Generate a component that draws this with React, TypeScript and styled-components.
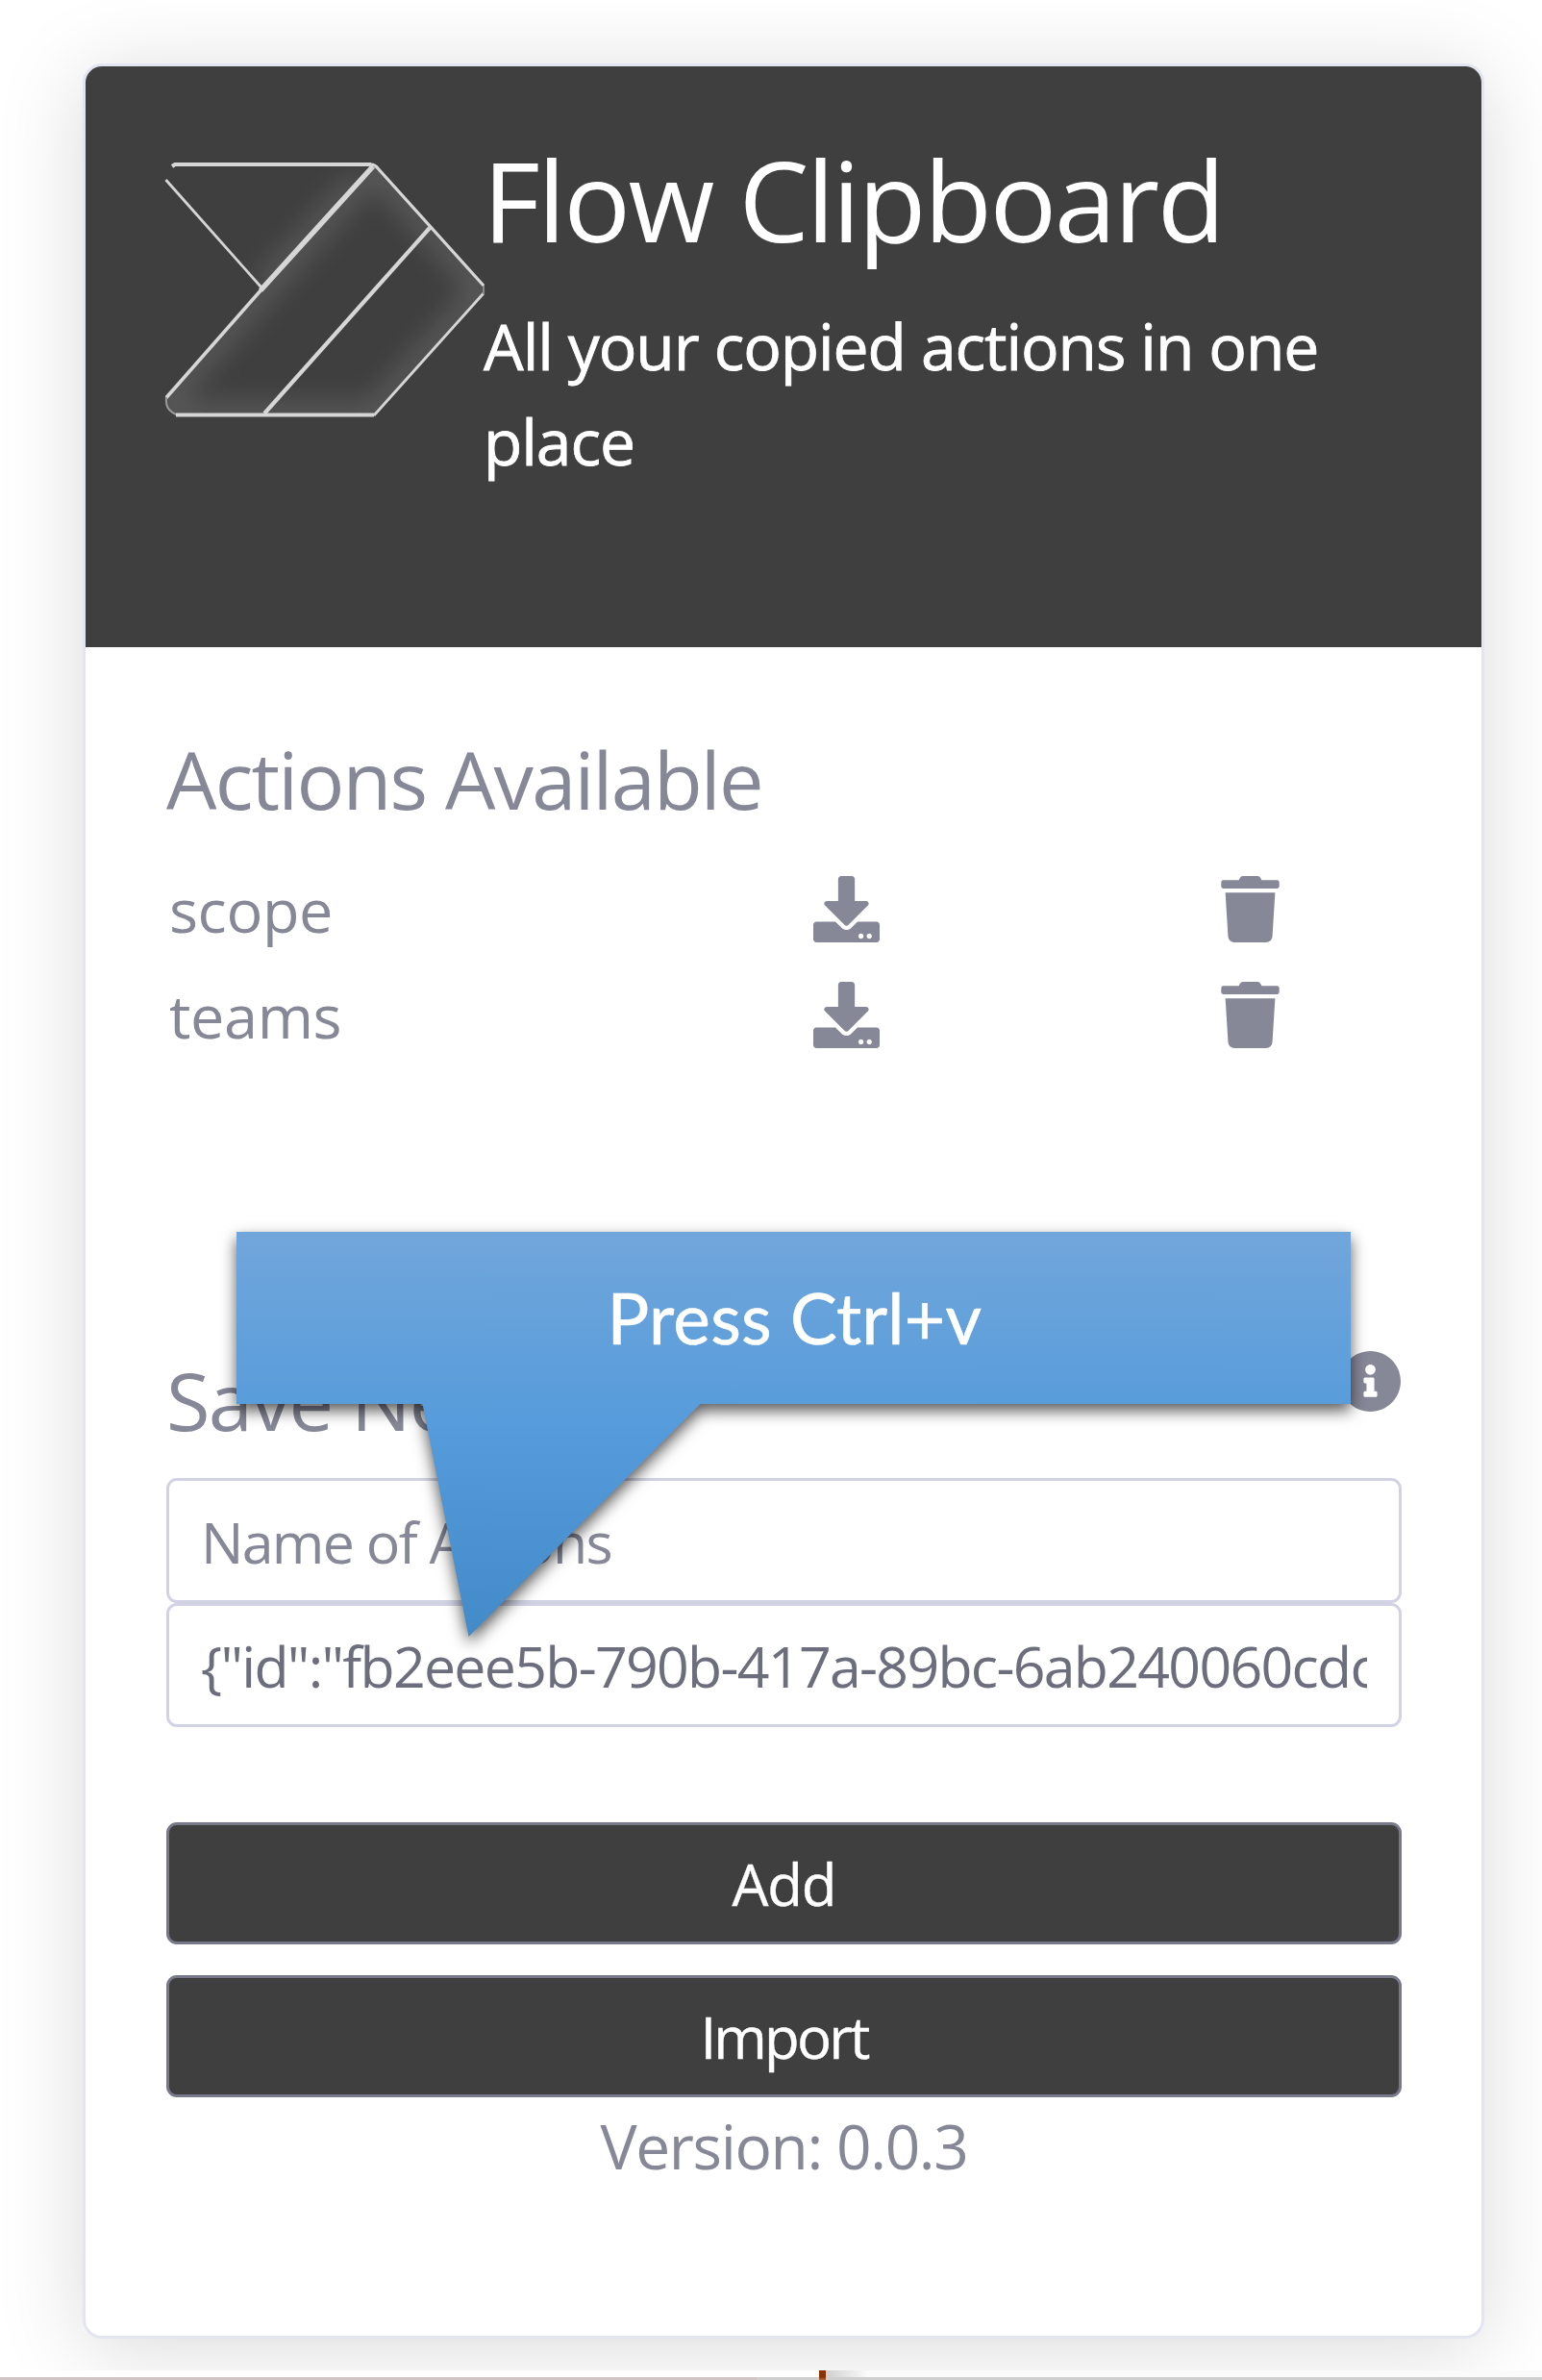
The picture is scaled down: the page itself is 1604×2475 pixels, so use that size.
import React from "react";
import styled, { createGlobalStyle } from "styled-components";
import { FaDownload, FaInfoCircle, FaTrash } from "react-icons/fa";

const GlobalStyle = createGlobalStyle`
  *, *::before, *::after { box-sizing: border-box; }
  body { margin: 0; background: #fff; overflow: hidden; }
`;

const Page = styled.div`
  display: flex;
  flex-direction: column;
  width: 1604px;
  height: 2475px;
  overflow: hidden;
  color: #868797;
  font-family: "Open Sans", "Noto Sans", sans-serif;
`;

const Stage = styled.main`
  position: relative;
  height: 2465px;
  padding: 66px 0 0 86px;
  overflow: hidden;
  background: #fff;
`;

const Card = styled.section`
  display: flex;
  flex-direction: column;
  width: 1458px;
  height: 2366px;
  border: 3px solid #e3e5f1;
  border-radius: 20px;
  background: #fff;
  box-shadow: 0 10px 90px rgba(0, 0, 0, 0.15);
  overflow: hidden;
`;

const Header = styled.header`
  display: flex;
  height: 604px;
  padding: 68px 83px 0;
  background: #3f3f3f;
  color: #fff;
`;

const Logo = styled.svg`
  flex: none;
  width: 335px;
  height: 272px;
  margin: 29px -2px 0 -2px;
`;

const HeaderText = styled.div`
  flex: 1;
  min-width: 0;
`;

const Title = styled.h1`
  margin: 0 0 33px -1px;
  font-size: 116px;
  font-weight: 400;
  line-height: 140px;
  letter-spacing: -2.5px;
`;

const Subtitle = styled.p`
  margin: 0;
  font-size: 66px;
  font-weight: 400;
  line-height: 99px;
  letter-spacing: -1.1px;
  -webkit-text-stroke: 0.8px #fff;
`;

const Body = styled.div`
  display: flex;
  flex-direction: column;
  padding: 87px 83px 0 84px;
`;

const Heading = styled.h2`
  margin: 0;
  font-size: 83px;
  font-weight: 400;
  line-height: 100px;
  letter-spacing: -1.85px;
`;

const ActionList = styled.ul`
  margin: 31px 0 0;
  padding: 0 0 0 3px;
  list-style: none;
`;

const ActionRow = styled.li`
  display: grid;
  grid-template-columns: 670px 420px 1fr;
  align-items: center;
  height: 109.5px;
  font-size: 63px;
  letter-spacing: -0.4px;
`;

const IconButton = styled.button`
  display: flex;
  justify-self: start;
  padding: 0;
  border: 0;
  background: none;
  color: inherit;
  font-size: 69px;
`;

const SaveHeader = styled.div`
  display: flex;
  justify-content: space-between;
  align-items: flex-start;
  margin: 296px 0 31px;
  & > svg { margin-top: -2px; font-size: 65px; }
`;

const Field = styled.input`
  width: 100%;
  height: 129.5px;
  padding: 2px 33px 0;
  border: 3px solid #d1d2e4;
  border-radius: 11px;
  outline: 0;
  background: #fff;
  color: #6c6d7d;
  font: 400 59px "Open Sans", "Noto Sans", sans-serif;
  letter-spacing: -1.69px;
  &::placeholder { color: #868797; opacity: 1; }
`;

const Buttons = styled.div`
  display: flex;
  flex-direction: column;
  gap: 32px;
  margin-top: 99px;
`;

const Button = styled.button<{ $tracking: number }>`
  height: 127px;
  padding: 0;
  border: 3px solid #77788a;
  border-radius: 11px;
  background: #3f3f3f;
  color: #fff;
  font: 400 60px "Open Sans", "Noto Sans", sans-serif;
  letter-spacing: ${(p) => p.$tracking}px;
  -webkit-text-stroke: 0.4px #fff;
`;

const Version = styled.p`
  margin: 1px 0 0;
  font-size: 64px;
  line-height: 99px;
  letter-spacing: -1.4px;
  text-align: center;
`;

const Callout = styled.div`
  position: absolute;
  left: 246px;
  top: 1281px;
  width: 1159px;
  height: 421px;
  filter: drop-shadow(0 7px 8px rgba(0, 0, 0, 0.65));
`;

const CalloutShape = styled.div`
  height: 421px;
  background: linear-gradient(#71a6db, #559bdb 50%, #438ac9);
  clip-path: polygon(0 0, 100% 0, 100% 179px, 482.5px 179px, 241.5px 100%, 193.5px 179px, 0 179px);
  color: #fff;
  font-family: Lato, "Open Sans", sans-serif;
  font-size: 73px;
  line-height: 178px;
  letter-spacing: 0.3px;
  text-align: center;
  text-indent: 2px;
  -webkit-text-stroke: 0.6px #fff;
`;

const Edge = styled.footer`
  display: flex;
  height: 10px;
`;

const EdgeLeft = styled.div`
  width: 852px;
  border-bottom: 3px solid;
  border-image: linear-gradient(90deg, #d2c5c5 784px, #cfcfcf 784px) 3;
`;

const EdgeTick = styled.div`
  width: 7px;
  background: linear-gradient(#8a3205 70%, #b06f4c);
`;

const EdgeRight = styled.div`
  flex: 1;
  border-bottom: 3px solid #cfcfcf;
  background: linear-gradient(90deg, #d0d0d0, #fafafa 44px);
`;

const FlowLogo = () => (
  <Logo viewBox="170 166 335 272" fill="none" stroke="#d6d6d6">
    <defs>
      <filter id="soft" x="-20%" y="-20%" width="140%" height="140%">
        <feGaussianBlur stdDeviation="14" />
      </filter>
      <clipPath id="body">
        <path d="M389 171 L503 297 Q506 301.500 503 306 L389 432 H184 Q170 428 173 414 Z" />
      </clipPath>
      <clipPath id="wing">
        <path d="M180 171 H389 L272 301 L173 188 Z" />
      </clipPath>
    </defs>
    <g clipPath="url(#body)">
      <path d="M389 171 L504 301 L389 432 H184 Q170 428 173 414 Z" stroke="#888" strokeOpacity="0.38" strokeWidth="25" filter="url(#soft)" />
    </g>
    <g clipPath="url(#wing)">
      <path d="M375 187 L272 301" stroke="#888" strokeOpacity="0.4" strokeWidth="20" filter="url(#soft)" />
    </g>
    <path d="M179 173 L182 171 H386" strokeWidth="4" />
    <path d="M172.500 187 L272 299" strokeWidth="2.800" />
    <path d="M388 173 L271 302" strokeWidth="5.500" />
    <path d="M273 300 L173 413.500" strokeWidth="3.600" />
    <path d="M173 413 Q172 421 176 426 Q180 430 184 431.500" strokeWidth="2" stroke="#999" />
    <path d="M183 431.500 H389" strokeWidth="4" />
    <path d="M389 432 L503 305" strokeWidth="2.800" />
    <path d="M503 306 V296" strokeWidth="2" stroke="#888" />
    <path d="M386 171 Q390 171 393 175 L503 297" strokeWidth="3.200" />
    <path d="M447 237 L275 430" strokeWidth="4.200" />
  </Logo>
);

const actions = ["scope", "teams"];

export default function App() {
  return (
    <Page>
      <GlobalStyle />
      <Stage>
        <Card>
          <Header>
            <FlowLogo />
            <HeaderText>
              <Title>Flow Clipboard</Title>
              <Subtitle>All your copied actions in one place</Subtitle>
            </HeaderText>
          </Header>
          <Body>
            <Heading>Actions Available</Heading>
            <ActionList>
              {actions.map((name) => (
                <ActionRow key={name}>
                  <span>{name}</span>
                  <IconButton aria-label={`Download ${name}`}><FaDownload /></IconButton>
                  <IconButton aria-label={`Delete ${name}`}><FaTrash /></IconButton>
                </ActionRow>
              ))}
            </ActionList>
            <SaveHeader>
              <Heading>Save New</Heading>
              <FaInfoCircle />
            </SaveHeader>
            <Field placeholder="Name of Actions" />
            <Field defaultValue={'{"id":"fb2eee5b-790b-417a-89bc-6ab240060cdc'} />
            <Buttons>
              <Button $tracking={-1.2}>Add</Button>
              <Button $tracking={-2.8}>Import</Button>
            </Buttons>
            <Version>Version: 0.0.3</Version>
          </Body>
        </Card>
        <Callout>
          <CalloutShape>Press Ctrl+v</CalloutShape>
        </Callout>
      </Stage>
      <Edge>
        <EdgeLeft />
        <EdgeTick />
        <EdgeRight />
      </Edge>
    </Page>
  );
}
